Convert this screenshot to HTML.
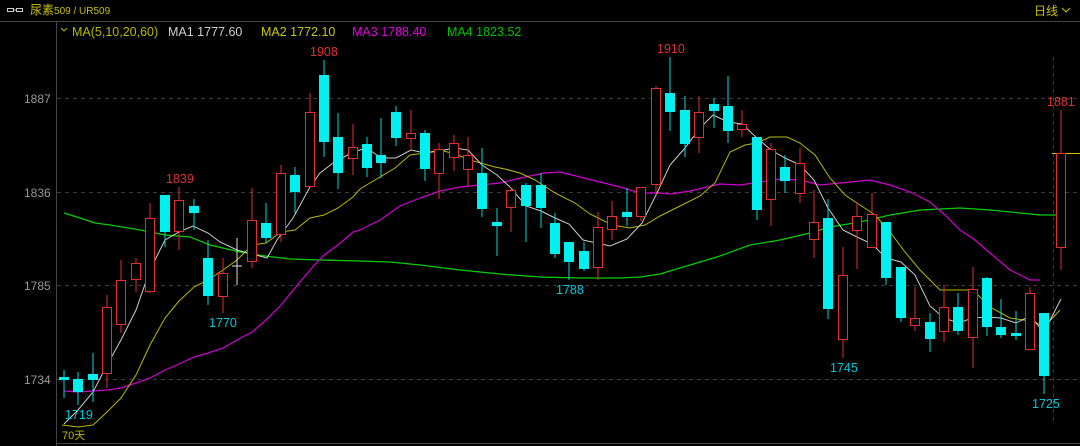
<!DOCTYPE html>
<html><head><meta charset="utf-8"><style>
html,body{margin:0;padding:0;background:#000;width:1080px;height:446px;overflow:hidden}
svg{display:block}
text{font-family:"Liberation Sans","Noto Sans CJK SC",sans-serif}
</style></head><body>
<svg width="1080" height="446" viewBox="0 0 1080 446">
<rect width="1080" height="446" fill="#000"/>
<!-- header -->
<g stroke="#ccc" stroke-width="1" fill="none"><rect x="7.5" y="8.5" width="6" height="3"/><rect x="16.5" y="8.5" width="6" height="3"/><line x1="13" y1="10" x2="17" y2="10"/></g>
<text x="30" y="14" font-size="12" fill="#c8c000">尿素<tspan font-size="10">509 / UR509</tspan></text>
<text x="1034" y="15" font-size="12" fill="#c8c000">日线</text>
<path d="M1062 8 l4 4 l4 -4" stroke="#c8c000" fill="none"/>
<line x1="0" y1="21.5" x2="1080" y2="21.5" stroke="#444"/>
<line x1="56.5" y1="22" x2="56.5" y2="446" stroke="#444"/>
<line x1="56" y1="443.5" x2="1080" y2="443.5" stroke="#444"/>
<!-- legend -->
<path d="M61 28 l3 3 l3 -3" stroke="#b0b000" fill="none"/>
<text x="72" y="36" font-size="12.5" fill="#b8b800">MA(5,10,20,60)</text>
<text x="168" y="36" font-size="12.5" fill="#d0d0d0">MA1 1777.60</text>
<text x="261" y="36" font-size="12.5" fill="#c8c800">MA2 1772.10</text>
<text x="352" y="36" font-size="12.5" fill="#e000e0">MA3 1788.40</text>
<text x="447" y="36" font-size="12.5" fill="#00c000">MA4 1823.52</text>
<!-- grid -->
<g stroke="#3a3a3a" stroke-dasharray="4 4"><line x1="57" y1="98.5" x2="1080" y2="98.5"/><line x1="57" y1="192.5" x2="1080" y2="192.5"/><line x1="57" y1="285.5" x2="1080" y2="285.5"/><line x1="57" y1="379.5" x2="1080" y2="379.5"/><line x1="1053.5" y1="57" x2="1053.5" y2="424"/></g>
<g font-size="12" fill="#999"><text x="24" y="103">1887</text><text x="24" y="197">1836</text><text x="24" y="290">1785</text><text x="24" y="384">1734</text></g>
<!-- MA lines -->
<polyline fill="none" stroke="#00d000" stroke-width="1.2" points="64,213 80,218 95,223 110,225 140,230 165,235 190,237 210,245 240,252 265,256 290,259 320,260 360,261 390,262 420,265 460,270 500,274 540,277 580,278 620,278 640,277 660,274 690,265 720,256 750,245 780,240 810,233 830,227 860,222 890,215 920,210 960,208 990,210 1020,213 1040,215 1060,215"/>
<polyline fill="none" stroke="#d000d0" stroke-width="1.2" points="64,391 78,392 93,391 107,390 121,388 136,383 150,378 165,370 179,364 194,357 208,353 223,348 237,340 252,332 266,320 281,305 295,288 310,270 324,255 338,245 353,232 360,230 380,220 400,206 420,198 440,191 460,187 480,185 500,183 520,178 545,173 560,172 580,177 600,182 620,187 640,193 660,193 670,194 690,191 720,184 740,185 760,182 780,179 800,180 820,185 840,183 870,180 890,185 910,192 930,202 945,215 960,230 975,240 990,253 1010,270 1030,280 1040,280"/>
<polyline fill="none" stroke="#b8b800" stroke-width="1" points="62,425 78,427 93,425 107,412 121,398 136,375 150,345 165,318 179,301 194,287 208,280 223,270 237,260 252,245 266,243 281,232 295,230 310,218 324,215 338,208 353,197 360,189 375,180 395,168 410,155 425,153 440,150 455,154 470,160 495,167 505,169 520,173 535,180 555,193 575,203 590,214 612,225 630,228 645,225 660,216 680,206 700,196 715,183 730,152 745,145 757,143 770,137 787,137 800,143 815,155 830,178 845,195 860,205 875,215 890,232 905,252 920,270 940,290 960,290 973,290 990,307 1010,318 1030,321 1045,326 1060,310"/>
<polyline fill="none" stroke="#ccc" stroke-width="1" points="64,424 78,410 93,392 107,365 121,340 136,310 150,270 165,240 179,232 193,226 208,233 220,242 237,250 267,258 277,240 293,218 310,187 320,173 333,163 353,152 367,148 381,158 396,158 411,150 425,153 439,151 454,148 468,150 482,165 497,175 511,188 526,206 541,211 555,218 569,224 583,240 610,246 627,239 642,223 657,193 670,165 685,148 700,128 713,115 728,122 742,124 757,138 771,150 785,158 800,165 814,180 828,208 843,230 857,237 872,244 886,258 901,262 915,275 930,306 944,318 958,323 973,318 987,317 1001,318 1016,323 1030,316 1044,332 1061,299"/>
<line x1="1052" y1="153.5" x2="1080" y2="153.5" stroke="#c8c000"/>
<!-- candles -->
<g stroke-width="1">
<g stroke="#00d8d8" fill="#00f0f0">
<line x1="64" y1="370" x2="64" y2="398"/><rect x="59" y="377" width="10" height="3" stroke="none"/>
<line x1="78" y1="372" x2="78" y2="405"/><rect x="73" y="379" width="10" height="13" stroke="none"/>
<line x1="93" y1="353" x2="93" y2="402"/><rect x="88" y="374" width="10" height="6" stroke="none"/>
<line x1="165" y1="195" x2="165" y2="247"/><rect x="160" y="195" width="10" height="37" stroke="none"/>
<line x1="194" y1="199" x2="194" y2="230"/><rect x="189" y="206" width="10" height="7" stroke="none"/>
<line x1="208" y1="240" x2="208" y2="305"/><rect x="203" y="258" width="10" height="38" stroke="none"/>
<line x1="266" y1="203" x2="266" y2="243"/><rect x="261" y="223" width="10" height="15" stroke="none"/>
<line x1="295" y1="167" x2="295" y2="213"/><rect x="290" y="175" width="10" height="17" stroke="none"/>
<line x1="324" y1="60" x2="324" y2="157"/><rect x="319" y="75" width="10" height="67" stroke="none"/>
<line x1="338" y1="113" x2="338" y2="189"/><rect x="333" y="137" width="10" height="36" stroke="none"/>
<line x1="367" y1="137" x2="367" y2="177"/><rect x="362" y="144" width="10" height="24" stroke="none"/>
<line x1="381" y1="118" x2="381" y2="178"/><rect x="376" y="155" width="10" height="8" stroke="none"/>
<line x1="396" y1="106" x2="396" y2="146"/><rect x="391" y="112" width="10" height="26" stroke="none"/>
<line x1="425" y1="130" x2="425" y2="181"/><rect x="420" y="133" width="10" height="36" stroke="none"/>
<line x1="482" y1="148" x2="482" y2="217"/><rect x="477" y="173" width="10" height="36" stroke="none"/>
<line x1="497" y1="208" x2="497" y2="256"/><rect x="492" y="222" width="10" height="4" stroke="none"/>
<line x1="526" y1="183" x2="526" y2="242"/><rect x="521" y="185" width="10" height="21" stroke="none"/>
<line x1="541" y1="173" x2="541" y2="228"/><rect x="536" y="185" width="10" height="23" stroke="none"/>
<line x1="555" y1="213" x2="555" y2="258"/><rect x="550" y="223" width="10" height="31" stroke="none"/>
<line x1="569" y1="242" x2="569" y2="280"/><rect x="564" y="242" width="10" height="20" stroke="none"/>
<line x1="584" y1="242" x2="584" y2="271"/><rect x="579" y="251" width="10" height="18" stroke="none"/>
<line x1="627" y1="188" x2="627" y2="226"/><rect x="622" y="212" width="10" height="5" stroke="none"/>
<line x1="670" y1="57" x2="670" y2="131"/><rect x="665" y="93" width="10" height="19" stroke="none"/>
<line x1="685" y1="96" x2="685" y2="157"/><rect x="680" y="110" width="10" height="34" stroke="none"/>
<line x1="714" y1="98" x2="714" y2="128"/><rect x="709" y="104" width="10" height="7" stroke="none"/>
<line x1="728" y1="76" x2="728" y2="143"/><rect x="723" y="106" width="10" height="25" stroke="none"/>
<line x1="757" y1="137" x2="757" y2="220"/><rect x="752" y="137" width="10" height="73" stroke="none"/>
<line x1="785" y1="155" x2="785" y2="193"/><rect x="780" y="167" width="10" height="14" stroke="none"/>
<line x1="828" y1="199" x2="828" y2="319"/><rect x="823" y="218" width="10" height="91" stroke="none"/>
<line x1="886" y1="222" x2="886" y2="285"/><rect x="881" y="222" width="10" height="56" stroke="none"/>
<line x1="901" y1="267" x2="901" y2="322"/><rect x="896" y="267" width="10" height="51" stroke="none"/>
<line x1="930" y1="313" x2="930" y2="352"/><rect x="925" y="322" width="10" height="17" stroke="none"/>
<line x1="958" y1="293" x2="958" y2="335"/><rect x="953" y="307" width="10" height="24" stroke="none"/>
<line x1="987" y1="277" x2="987" y2="336"/><rect x="982" y="278" width="10" height="49" stroke="none"/>
<line x1="1001" y1="299" x2="1001" y2="338"/><rect x="996" y="327" width="10" height="8" stroke="none"/>
<line x1="1016" y1="311" x2="1016" y2="340"/><rect x="1011" y="333" width="10" height="3" stroke="none"/>
<line x1="1044" y1="313" x2="1044" y2="394"/><rect x="1039" y="313" width="10" height="63" stroke="none"/>
</g>
<g stroke="#e03030" fill="#000">
<line x1="107" y1="295" x2="107" y2="388"/><rect x="102.5" y="307.5" width="9" height="66"/>
<line x1="121" y1="260" x2="121" y2="333"/><rect x="116.5" y="280.5" width="9" height="44"/>
<line x1="136" y1="258" x2="136" y2="292"/><rect x="131.5" y="263.5" width="9" height="16"/>
<line x1="150" y1="203" x2="150" y2="293"/><rect x="145.5" y="218.5" width="9" height="73"/>
<line x1="179" y1="187" x2="179" y2="250"/><rect x="174.5" y="200.5" width="9" height="31"/>
<line x1="223" y1="258" x2="223" y2="313"/><rect x="218.5" y="273.5" width="9" height="23"/>
<line x1="252" y1="188" x2="252" y2="268"/><rect x="247.5" y="220.5" width="9" height="41"/>
<line x1="281" y1="165" x2="281" y2="242"/><rect x="276.5" y="173.5" width="9" height="61"/>
<line x1="310" y1="93" x2="310" y2="187"/><rect x="305.5" y="112.5" width="9" height="74"/>
<line x1="353" y1="124" x2="353" y2="175"/><rect x="348.5" y="147.5" width="9" height="11"/>
<line x1="411" y1="110" x2="411" y2="150"/><rect x="406.5" y="133.5" width="9" height="5"/>
<line x1="439" y1="143" x2="439" y2="199"/><rect x="434.5" y="149.5" width="9" height="24"/>
<line x1="454" y1="135" x2="454" y2="171"/><rect x="449.5" y="143.5" width="9" height="14"/>
<line x1="468" y1="137" x2="468" y2="187"/><rect x="463.5" y="155.5" width="9" height="14"/>
<line x1="511" y1="187" x2="511" y2="232"/><rect x="506.5" y="190.5" width="9" height="17"/>
<line x1="598" y1="212" x2="598" y2="280"/><rect x="593.5" y="227.5" width="9" height="40"/>
<line x1="612" y1="201" x2="612" y2="240"/><rect x="607.5" y="216.5" width="9" height="13"/>
<line x1="641" y1="187" x2="641" y2="221"/><rect x="636.5" y="187.5" width="9" height="29"/>
<line x1="656" y1="86" x2="656" y2="195"/><rect x="651.5" y="88.5" width="9" height="96"/>
<line x1="699" y1="96" x2="699" y2="153"/><rect x="694.5" y="112.5" width="9" height="25"/>
<line x1="742" y1="110" x2="742" y2="137"/><rect x="737.5" y="124.5" width="9" height="5"/>
<line x1="771" y1="143" x2="771" y2="226"/><rect x="766.5" y="149.5" width="9" height="50"/>
<line x1="800" y1="148" x2="800" y2="203"/><rect x="795.5" y="163.5" width="9" height="30"/>
<line x1="814" y1="190" x2="814" y2="258"/><rect x="809.5" y="222.5" width="9" height="17"/>
<line x1="843" y1="247" x2="843" y2="358"/><rect x="838.5" y="275.5" width="9" height="64"/>
<line x1="857" y1="203" x2="857" y2="269"/><rect x="852.5" y="216.5" width="9" height="14"/>
<line x1="872" y1="193" x2="872" y2="247"/><rect x="867.5" y="214.5" width="9" height="33"/>
<line x1="915" y1="287" x2="915" y2="331"/><rect x="910.5" y="318.5" width="9" height="7"/>
<line x1="944" y1="285" x2="944" y2="342"/><rect x="939.5" y="307.5" width="9" height="24"/>
<line x1="973" y1="267" x2="973" y2="368"/><rect x="968.5" y="289.5" width="9" height="48"/>
<line x1="1030" y1="287" x2="1030" y2="349"/><rect x="1025.5" y="293.5" width="9" height="56"/>
<line x1="1061" y1="110" x2="1061" y2="270"/><rect x="1056.5" y="153.5" width="9" height="94"/>
</g>
<g stroke="#ddd"><line x1="237" y1="238" x2="237" y2="285"/><line x1="232" y1="266" x2="242" y2="266"/></g>
</g>
<!-- labels -->
<g font-size="12.5">
<text x="310" y="56" fill="#e03030">1908</text>
<text x="166" y="183" fill="#e03030">1839</text>
<text x="657" y="53" fill="#e03030">1910</text>
<text x="1047" y="106" fill="#e03030">1881</text>
<text x="209" y="327" fill="#00c8d8">1770</text>
<text x="556" y="294" fill="#00c8d8">1788</text>
<text x="830" y="372" fill="#00c8d8">1745</text>
<text x="1032" y="408" fill="#00c8d8">1725</text>
<text x="65" y="419" fill="#00c8d8">1719</text>
<text x="62" y="439" font-size="11" fill="#b8b800">70天</text>
</g>
</svg>
</body></html>
